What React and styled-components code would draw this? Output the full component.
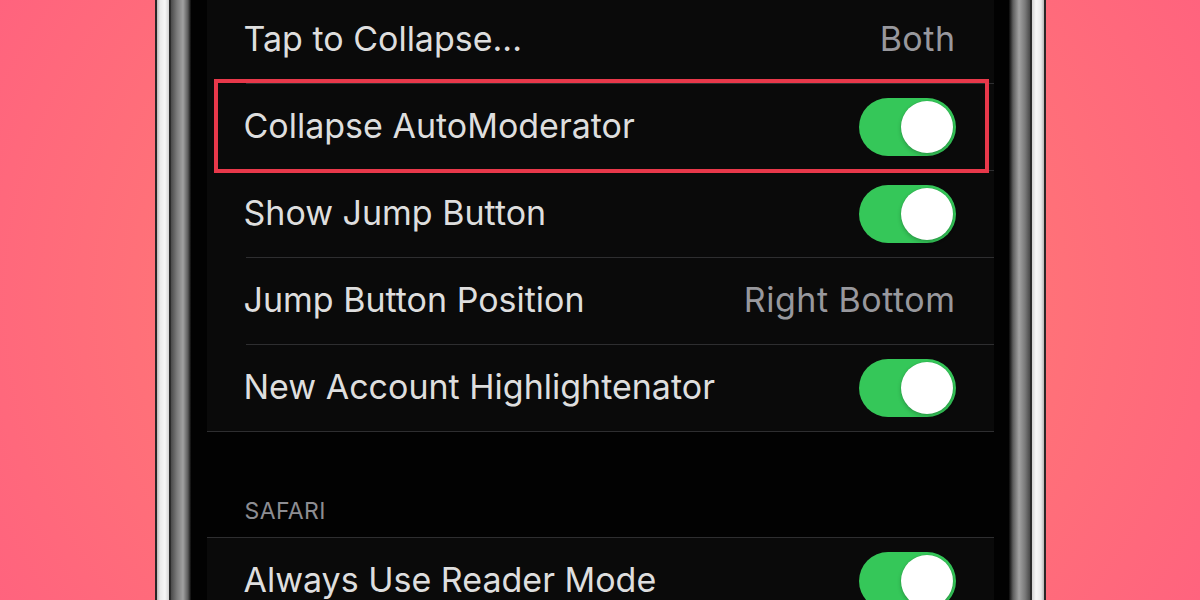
import React from "react";
import styled, { createGlobalStyle } from "styled-components";

const GlobalStyle = createGlobalStyle`
  html, body {
    margin: 0;
    padding: 0;
    height: 600px;
    overflow: hidden;
  }
  body {
    font-family: "Inter", "Roboto", "Liberation Sans", sans-serif;
    -webkit-font-smoothing: antialiased;
  }
`;

const Backdrop = styled.div`
  width: 1200px;
  height: 600px;
  display: flex;
  justify-content: center;
  overflow: hidden;
  background:
    radial-gradient(ellipse 70% 120% at 50% 50%, #ff8474 0%, #ff7577 45%, #ff5b81 100%);
`;

const Phone = styled.div`
  width: 891px;
  height: 600px;
  display: flex;
  box-sizing: border-box;
  padding: 0 37px 0 36px;
  background: linear-gradient(
    90deg,
    #2a2626 0px, #2a2626 2px,
    #b8b8b8 2px, #e9e9e9 5px, #f7f7f7 10px, #d2d2d2 14px,
    #2b2b2b 14px, #2b2b2b 16px,
    #4a4a4a 16px, #7c7c7c 22px, #a0a0a0 28px, #5a5a5a 33px, #0a0a0a 36px,
    #0a0a0a calc(100% - 37px), #5e5e5e calc(100% - 33px), #a2a2a2 calc(100% - 27px),
    #7a7a7a calc(100% - 21px), #4a4a4a calc(100% - 16px),
    #2b2b2b calc(100% - 16px), #2b2b2b calc(100% - 14px),
    #d2d2d2 calc(100% - 14px), #f7f7f7 calc(100% - 10px), #e9e9e9 calc(100% - 5px), #b8b8b8 calc(100% - 2px),
    #2a2626 calc(100% - 2px), #2a2626 100%
  );
`;

const Screen = styled.div`
  flex: 1;
  height: 600px;
  background: #020202;
  padding: 0 15px 0 16px;
  overflow: hidden;
`;

const List = styled.div`
  margin-top: -3px;
  display: flex;
  flex-direction: column;
`;

const Group = styled.div`
  display: flex;
  flex-direction: column;
  border-top: ${(p) => (p.$topLine ? "1px solid #2e2e30" : "none")};
`;

const Row = styled.div`
  position: relative;
  height: 87px;
  box-sizing: border-box;
  padding: 0 38px 2px 37px;
  display: flex;
  align-items: center;
  justify-content: space-between;
  background: #0a0a0a;

  &::after {
    content: "";
    position: absolute;
    left: ${(p) => (p.$fullLine ? "0" : "39px")};
    right: 0;
    bottom: 0;
    height: 1px;
    background: #2e2e30;
  }

  ${(p) =>
    p.$highlight &&
    `
    &::before {
      content: "";
      position: absolute;
      top: -5px;
      bottom: -2px;
      left: 7px;
      right: 5px;
      border: 4px solid #e8384a;
      z-index: 2;
      pointer-events: none;
    }
  `}
`;

const Label = styled.span`
  font-size: 34px;
  color: #dedede;
  margin-bottom: 2px;
  white-space: nowrap;
`;

const Value = styled.span`
  font-size: 34px;
  color: #98989d;
  letter-spacing: 0.5px;
  margin-bottom: 2px;
  white-space: nowrap;
`;

const Track = styled.div`
  width: 97px;
  height: 58px;
  border-radius: 29px;
  background: ${(p) => (p.$on ? "#35c759" : "#39393d")};
  display: flex;
  align-items: center;
  justify-content: ${(p) => (p.$on ? "flex-end" : "flex-start")};
  padding: 0 3px;
  box-sizing: border-box;
  flex-shrink: 0;
`;

const Knob = styled.div`
  width: 52px;
  height: 52px;
  border-radius: 50%;
  background: #ffffff;
  box-shadow: 0 2px 4px rgba(0, 0, 0, 0.22), 0 0 0 0.5px rgba(0, 0, 0, 0.08);
`;

const SectionHeader = styled.div`
  height: 105px;
  box-sizing: border-box;
  display: flex;
  align-items: flex-end;
  padding: 0 0 12px 38px;
  font-size: 23px;
  color: #8d8d92;
  letter-spacing: 0.4px;
  background: #020202;
`;

function Toggle({ on }) {
  return (
    <Track $on={on}>
      <Knob />
    </Track>
  );
}

function SettingRow({ label, value, toggle, highlight, fullLine }) {
  return (
    <Row $highlight={highlight} $fullLine={fullLine}>
      <Label>{label}</Label>
      {toggle ? <Toggle on /> : <Value>{value}</Value>}
    </Row>
  );
}

export default function App() {
  return (
    <>
      <GlobalStyle />
      <Backdrop>
        <Phone>
          <Screen>
            <List>
              <Group>
                <SettingRow label="Tap to Collapse..." value="Both" />
                <SettingRow label="Collapse AutoModerator" toggle highlight />
                <SettingRow label="Show Jump Button" toggle />
                <SettingRow label="Jump Button Position" value="Right Bottom" />
                <SettingRow label="New Account Highlightenator" toggle fullLine />
              </Group>
              <SectionHeader>SAFARI</SectionHeader>
              <Group $topLine>
                <SettingRow label="Always Use Reader Mode" toggle />
              </Group>
            </List>
          </Screen>
        </Phone>
      </Backdrop>
    </>
  );
}
